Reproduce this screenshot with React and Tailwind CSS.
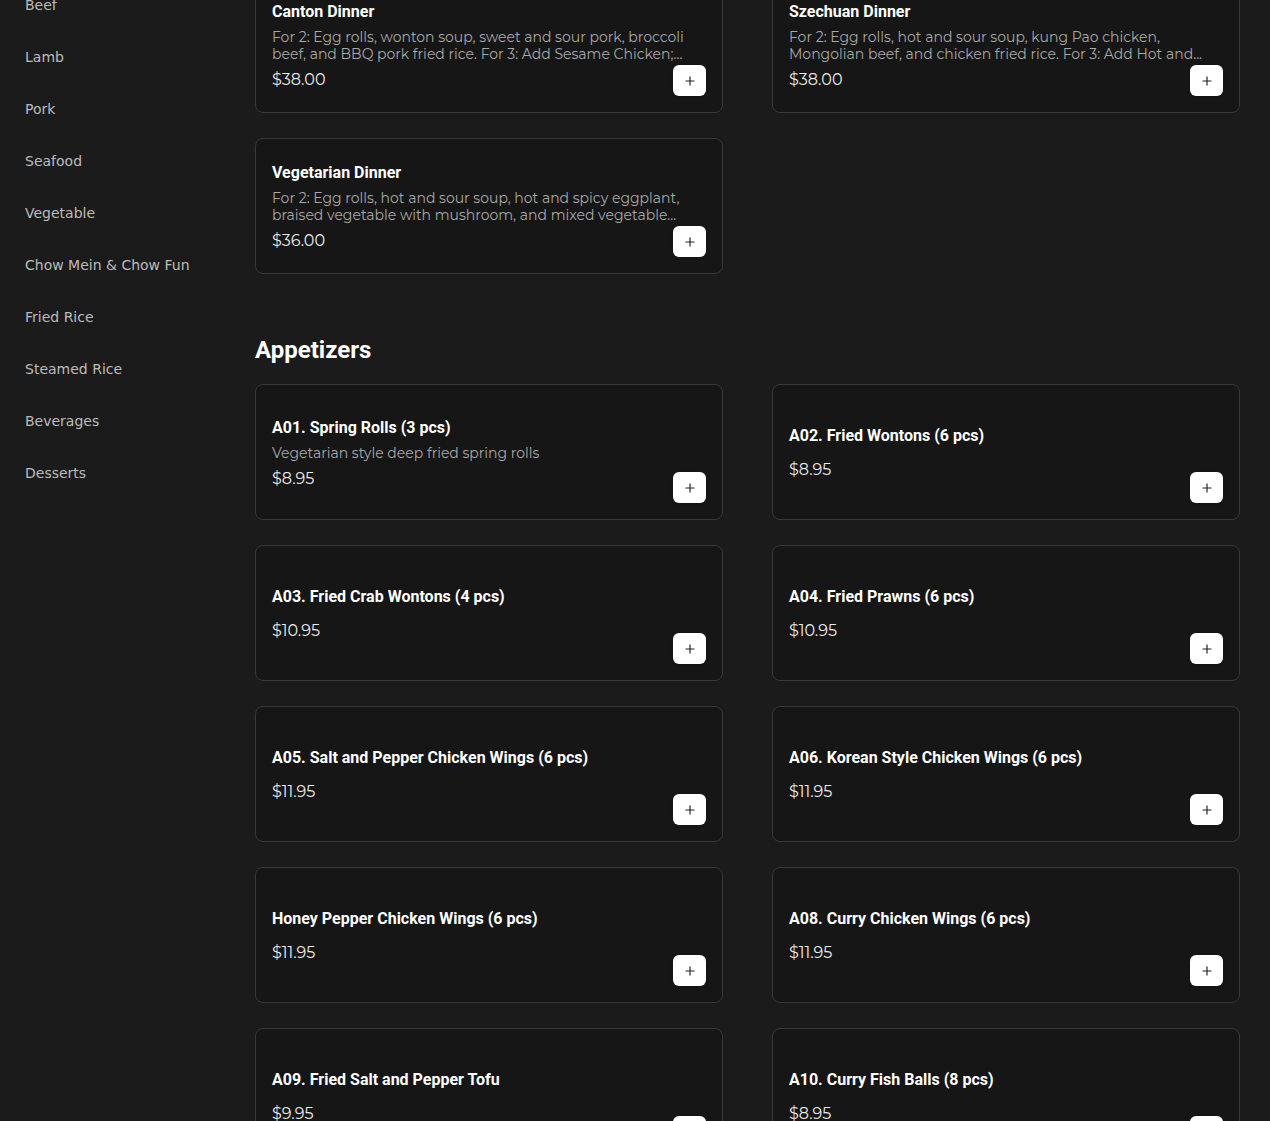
import { Plus } from "lucide-react";

const categories = [
  "Beef",
  "Lamb",
  "Pork",
  "Seafood",
  "Vegetable",
  "Chow Mein & Chow Fun",
  "Fried Rice",
  "Steamed Rice",
  "Beverages",
  "Desserts",
];

// descriptions are cut where the menu cuts them
const dinners = [
  {
    name: "Canton Dinner",
    description:
      "For 2: Egg rolls, wonton soup, sweet and sour pork, broccoli beef, and BBQ pork fried rice. For 3: Add Sesame Chicken;...",
    price: "$38.00",
  },
  {
    name: "Szechuan Dinner",
    description:
      "For 2: Egg rolls, hot and sour soup, kung Pao chicken, Mongolian beef, and chicken fried rice. For 3: Add Hot and...",
    price: "$38.00",
  },
  {
    name: "Vegetarian Dinner",
    description:
      "For 2: Egg rolls, hot and sour soup, hot and spicy eggplant, braised vegetable with mushroom, and mixed vegetable...",
    price: "$36.00",
  },
];

const appetizers = [
  {
    name: "A01. Spring Rolls (3 pcs)",
    description: "Vegetarian style deep fried spring rolls",
    price: "$8.95",
  },
  { name: "A02. Fried Wontons (6 pcs)", price: "$8.95" },
  { name: "A03. Fried Crab Wontons (4 pcs)", price: "$10.95" },
  { name: "A04. Fried Prawns (6 pcs)", price: "$10.95" },
  { name: "A05. Salt and Pepper Chicken Wings (6 pcs)", price: "$11.95" },
  { name: "A06. Korean Style Chicken Wings (6 pcs)", price: "$11.95" },
  { name: "Honey Pepper Chicken Wings (6 pcs)", price: "$11.95" },
  { name: "A08. Curry Chicken Wings (6 pcs)", price: "$11.95" },
  { name: "A09. Fried Salt and Pepper Tofu", price: "$9.95" },
  { name: "A10. Curry Fish Balls (8 pcs)", price: "$8.95" },
];

const bodyFont = "font-['Montserrat','Open_Sans',sans-serif]";

function MenuCard({ item }) {
  return (
    <div className="relative flex h-[136px] items-center rounded-lg border border-[#383838] bg-[#161616] px-4">
      <div className="w-full pt-[2px]">
        <h3 className="font-['Roboto',sans-serif] text-base leading-6 font-bold text-white">
          {item.name}
        </h3>
        {item.description ? (
          <p
            className={`${bodyFont} mt-[5px] line-clamp-2 text-sm leading-[17px] text-[#a8a8a8]`}
          >
            {item.description}
          </p>
        ) : null}
        <p
          className={`${bodyFont} text-base leading-6 text-[#ececec] ${
            item.description ? "mt-[5px]" : "mt-[10px]"
          }`}
        >
          {item.price}
        </p>
      </div>
      <button
        type="button"
        className="absolute right-4 bottom-4 flex h-[31px] w-[33px] items-center justify-center rounded-md bg-white text-[#222] shadow-sm"
      >
        <Plus size={14} strokeWidth={2} />
      </button>
    </div>
  );
}

export default function App() {
  return (
    <div className="h-[1121px] overflow-hidden bg-[#1b1b1b]">
      <div className="flex">
        <aside className="-mt-[21px] w-[255px] shrink-0 pl-[25px]">
          {categories.map((category) => (
            <div
              key={category}
              className="py-4 font-['DejaVu_Sans',sans-serif] text-sm leading-5 text-[#bcbcbc]"
            >
              {category}
            </div>
          ))}
        </aside>

        <main className="-mt-[23px] w-[985px]">
          <section className="grid grid-cols-2 gap-x-[49px] gap-y-[25px]">
            {dinners.map((item) => (
              <MenuCard key={item.name} item={item} />
            ))}
          </section>

          <section className="mt-[60px]">
            <h2 className="mb-[18px] font-['Roboto',sans-serif] text-2xl leading-8 font-bold text-white">
              Appetizers
            </h2>
            <div className="grid grid-cols-2 gap-x-[49px] gap-y-[25px]">
              {appetizers.map((item) => (
                <MenuCard key={item.name} item={item} />
              ))}
            </div>
          </section>
        </main>
      </div>
    </div>
  );
}
